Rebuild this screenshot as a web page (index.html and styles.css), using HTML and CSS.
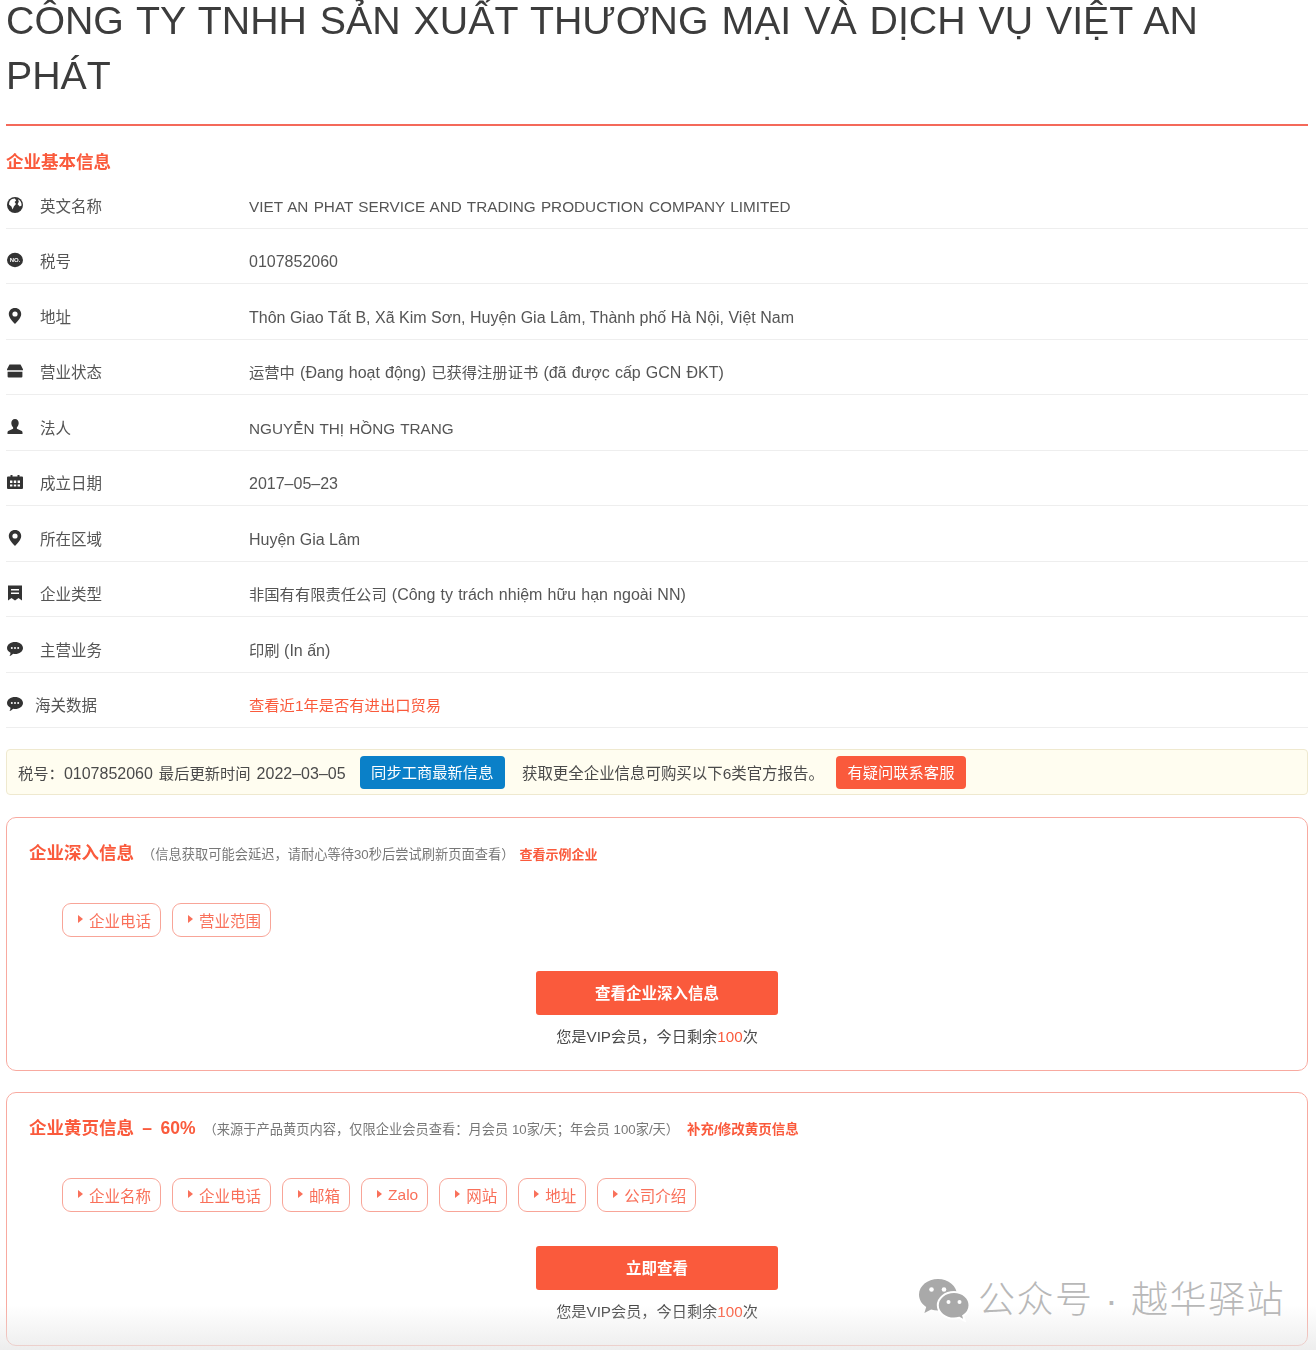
FILE: index.html
```html
<!DOCTYPE html>
<html lang="zh-CN">
<head>
    <meta charset="UTF-8">
    <title>企业基本信息</title>
    <link rel="stylesheet" href="styles.css">
</head>
<body>
    <svg class="sprite" xmlns="http://www.w3.org/2000/svg">
        <symbol id="i-globe" viewBox="0 0 16 16">
            <circle cx="8" cy="8" r="8" fill="#333"/>
            <path d="M5 2 7.800 1.600 9.200 3.400 7.600 5 9 7 7 9.200 5.600 12.400 4.400 9.600 2 7.600A6.400 6.400 0 0 1 5 2Z" fill="#fff"/>
            <path d="M11 2.200A6.600 6.600 0 0 1 14.600 8.400L12.800 9.400 10.600 7.200 11.800 4.800Z" fill="#fff"/>
        </symbol>
        <symbol id="i-no" viewBox="0 0 16 16">
            <ellipse cx="8" cy="8" rx="8" ry="7.200" fill="#333"/>
            <text x="8" y="10" text-anchor="middle" class="badge-text">NO.</text>
        </symbol>
        <symbol id="i-pin" viewBox="0 0 16 16">
            <path d="M8 0C4.200 0 1.800 2.700 1.800 6c0 3.800 3.900 7.600 6.200 10 2.300-2.400 6.200-6.200 6.200-10C14.200 2.700 11.800 0 8 0Z" fill="#333"/>
            <circle cx="8" cy="6" r="2.600" fill="#fff"/>
        </symbol>
        <symbol id="i-store" viewBox="0 0 16 16">
            <path d="M2.500 1.500h11L16 6.200v1H0v-1Z" fill="#333"/>
            <path d="M.6 8.800h14.800v4.700a1 1 0 0 1-1 1H1.600a1 1 0 0 1-1-1Z" fill="#333"/>
        </symbol>
        <symbol id="i-user" viewBox="0 0 16 16">
            <path d="M8 0c2.300 0 3.700 1.700 3.700 4 0 1.800-.8 3.500-1.800 4.300v1.400l4.400 2c.9.400 1.200 1 1.200 1.800V15H.5v-1.500c0-.8.300-1.400 1.200-1.800l4.400-2V8.300C5.100 7.500 4.300 5.800 4.300 4 4.300 1.700 5.700 0 8 0Z" fill="#333"/>
        </symbol>
        <symbol id="i-calendar" viewBox="0 0 16 16">
            <path d="M1 2.500h2.500V1h2v1.500h5V1h2v1.500H15a1 1 0 0 1 1 1V14a1 1 0 0 1-1 1H1a1 1 0 0 1-1-1V3.500a1 1 0 0 1 1-1Z" fill="#333"/>
            <path d="M3 6.500h2.400v2.400H3ZM6.800 6.500h2.400v2.400H6.800ZM10.600 6.500H13v2.400h-2.400ZM3 10.400h2.400v2.200H3ZM6.800 10.400h2.400v2.200H6.800ZM10.600 10.400H13v2.200h-2.400Z" fill="#fff"/>
        </symbol>
        <symbol id="i-book" viewBox="0 0 16 16">
            <path d="M1 .5h14v15l-3.500-2.600L8 15.500l-3.500-2.600L1 15.500Z" fill="#333"/>
            <path d="M4 4h8v1.600H4ZM4 7.500h8v1.600H4Z" fill="#fff"/>
        </symbol>
        <symbol id="i-chat" viewBox="0 0 16 16">
            <path d="M8 1c4.400 0 8 2.600 8 6s-3.600 6-8 6c-.7 0-1.300-.1-1.900-.2C5 14 3.800 14.800 2.500 15c.7-1 1-2 1-3.200C1.400 10.700 0 9 0 7c0-3.400 3.600-6 8-6Z" fill="#333"/>
            <circle cx="4.800" cy="7" r="1" fill="#fff"/>
            <circle cx="8" cy="7" r="1" fill="#fff"/>
            <circle cx="11.200" cy="7" r="1" fill="#fff"/>
        </symbol>
    </svg>

    <div class="page">
        <h1 class="company-name">CÔNG TY TNHH SẢN XUẤT THƯƠNG MẠI VÀ DỊCH VỤ VIỆT AN PHÁT</h1>

        <h2 class="section-title">企业基本信息</h2>

        <div class="info-list">
            <div class="info-row">
                <svg class="info-icon"><use href="#i-globe"/></svg>
                <span class="info-label">英文名称</span>
                <span class="info-value info-caps">VIET AN PHAT SERVICE AND TRADING PRODUCTION COMPANY LIMITED</span>
            </div>
            <div class="info-row">
                <svg class="info-icon"><use href="#i-no"/></svg>
                <span class="info-label">税号</span>
                <span class="info-value">0107852060</span>
            </div>
            <div class="info-row">
                <svg class="info-icon"><use href="#i-pin"/></svg>
                <span class="info-label">地址</span>
                <span class="info-value">Thôn Giao Tất B, Xã Kim Sơn, Huyện Gia Lâm, Thành phố Hà Nội, Việt Nam</span>
            </div>
            <div class="info-row">
                <svg class="info-icon"><use href="#i-store"/></svg>
                <span class="info-label">营业状态</span>
                <span class="info-value info-mixed"><span class="cjk">运营中</span> (Đang hoạt động) <span class="cjk">已获得注册证书</span> (đã được cấp GCN ĐKT)</span>
            </div>
            <div class="info-row">
                <svg class="info-icon"><use href="#i-user"/></svg>
                <span class="info-label">法人</span>
                <span class="info-value info-caps">NGUYỄN THỊ HỒNG TRANG</span>
            </div>
            <div class="info-row">
                <svg class="info-icon"><use href="#i-calendar"/></svg>
                <span class="info-label">成立日期</span>
                <span class="info-value">2017–05–23</span>
            </div>
            <div class="info-row">
                <svg class="info-icon"><use href="#i-pin"/></svg>
                <span class="info-label">所在区域</span>
                <span class="info-value">Huyện Gia Lâm</span>
            </div>
            <div class="info-row">
                <svg class="info-icon"><use href="#i-book"/></svg>
                <span class="info-label">企业类型</span>
                <span class="info-value info-mixed"><span class="cjk">非国有有限责任公司</span> (Công ty trách nhiệm hữu hạn ngoài NN)</span>
            </div>
            <div class="info-row">
                <svg class="info-icon"><use href="#i-chat"/></svg>
                <span class="info-label">主营业务</span>
                <span class="info-value"><span class="cjk">印刷</span> (In ấn)</span>
            </div>
            <div class="info-row info-row-tight">
                <svg class="info-icon"><use href="#i-chat"/></svg>
                <span class="info-label">海关数据</span>
                <a class="info-value info-link">查看近1年是否有进出口贸易</a>
            </div>
        </div>

        <div class="notice">
            <span class="notice-meta"><span class="cjk">税号：</span>0107852060 <span class="cjk">最后更新时间</span> 2022–03–05</span>
            <a class="notice-btn notice-btn-blue">同步工商最新信息</a>
            <span class="notice-text">获取更全企业信息可购买以下6类官方报告。</span>
            <a class="notice-btn notice-btn-red">有疑问联系客服</a>
        </div>

        <section class="card">
            <div class="card-head">
                <h3 class="card-title">企业深入信息</h3>
                <span class="card-note">（信息获取可能会延迟，请耐心等待30秒后尝试刷新页面查看）</span>
                <a class="card-link">查看示例企业</a>
            </div>
            <div class="tags">
                <span class="tag">企业电话</span>
                <span class="tag">营业范围</span>
            </div>
            <div class="card-action">
                <a class="main-btn">查看企业深入信息</a>
                <p class="quota">您是VIP会员，今日剩余<em>100</em>次</p>
            </div>
        </section>

        <section class="card">
            <div class="card-head">
                <h3 class="card-title">企业黄页信息 – 60%</h3>
                <span class="card-note">（来源于产品黄页内容，仅限企业会员查看：月会员 10家/天；年会员 100家/天）</span>
                <a class="card-link card-link-long">补充/修改黄页信息</a>
            </div>
            <div class="tags">
                <span class="tag">企业名称</span>
                <span class="tag">企业电话</span>
                <span class="tag">邮箱</span>
                <span class="tag">Zalo</span>
                <span class="tag">网站</span>
                <span class="tag">地址</span>
                <span class="tag">公司介绍</span>
            </div>
            <div class="card-action">
                <a class="main-btn">立即查看</a>
                <p class="quota">您是VIP会员，今日剩余<em>100</em>次</p>
            </div>
        </section>
    </div>

    <!-- 底部渐变和水印盖在内容上 -->
    <div class="bottom-fade"></div>
    <div class="watermark">
        <svg class="watermark-logo" viewBox="0 0 52 44">
            <path d="M20 1C9.500 1 1 8 1 16.800c0 5 2.800 9.300 7.200 12.200L6.400 35l6.700-3.600c2.200.6 4.500 1 6.900 1 10.500 0 19-7 19-15.600S30.500 1 20 1Z" fill="#a9a9a9"/>
            <path d="M36 14c-9 0-16.200 6-16.200 13.300S27 40.600 36 40.600c1.900 0 3.700-.3 5.400-.8l5.300 3-1.500-5c3.900-2.400 6.300-6.200 6.300-10.500C51.500 20 45 14 36 14Z" fill="#a9a9a9" stroke="#fff" stroke-width="2"/>
            <circle cx="13.500" cy="11.500" r="2.300" fill="#fff"/>
            <circle cx="26" cy="11.500" r="2.300" fill="#fff"/>
            <circle cx="30.500" cy="24" r="2" fill="#fff"/>
            <circle cx="41.500" cy="24" r="2" fill="#fff"/>
        </svg>
        <span class="watermark-text">公众号 · 越华驿站</span>
    </div>
</body>
</html>
```

FILE: styles.css
```css
* {
    margin: 0;
    padding: 0;
    box-sizing: border-box;
}

html, body {
    height: 1350px;
    overflow: hidden;
}

body {
    font-family: "Liberation Sans", "Noto Sans CJK SC", sans-serif;
    background: #fff;
    color: #555;
    position: relative;
}

.sprite {
    display: none;
}

/* 原图本身有点糊 */
.page {
    padding: 0 8px 0 6px;
    filter: blur(0.4px);
}

.cjk {
    font-size: 15.3px;
}

.company-name {
    margin-top: -7px;
    padding-bottom: 21px;
    border-bottom: 2px solid #f4695a;
    font-size: 39.3px;
    line-height: 55px;
    font-weight: normal;
    word-spacing: 2px;
    color: #3c3c3c;
}

.section-title {
    margin-top: 24px;
    margin-bottom: -1px;
    font-size: 17.5px;
    line-height: 24px;
    color: #fa5a3c;
}

.info-row {
    display: grid;
    grid-template-columns: 34px 209px 1fr;
    align-items: center;
    height: 55.5px;
    padding: 21.5px 0 9px;
    border-bottom: 1px solid #eee;
    font-size: 16px;
    line-height: 24px;
}

.info-row-tight {
    grid-template-columns: 29px 214px 1fr;
}

.info-icon {
    width: 16px;
    height: 16px;
    margin: -4px 0 0 1px;
}

.badge-text {
    font-family: "Liberation Sans", sans-serif;
    font-size: 6px;
    font-weight: bold;
    fill: #fff;
}

.info-label {
    font-size: 15.5px;
}

.info-caps {
    font-size: 15.3px;
    word-spacing: 1px;
}

.info-mixed {
    word-spacing: 0.7px;
}

.info-link {
    font-size: 15.3px;
    color: #fa5a3c;
}

.notice {
    display: flex;
    align-items: center;
    height: 46px;
    margin-top: 21px;
    padding: 0 11px;
    background: #fffdf0;
    border: 1px solid #efe9cf;
    border-radius: 4px;
    font-size: 16px;
    color: #4a4a4a;
}

.notice-meta {
    word-spacing: 1.5px;
}

.notice-text {
    margin-left: 17px;
    font-size: 15.45px;
}

.notice-btn {
    height: 33px;
    padding: 0 11.5px;
    border-radius: 4px;
    font-size: 15.3px;
    line-height: 33px;
    color: #fff;
}

.notice-btn-blue {
    margin-left: 14px;
    background: #0a80c8;
}

.notice-btn-red {
    margin-left: 12px;
    background: #fa5a3c;
}

.card {
    height: 254px;
    margin-top: 22px;
    padding: 22px 22px 0;
    border: 1px solid #f8aaa0;
    border-radius: 10px;
}

.card + .card {
    margin-top: 21px;
}

.card-head {
    display: flex;
    align-items: center;
    height: 26px;
}

.card-title {
    font-size: 17.5px;
    line-height: 26px;
    word-spacing: 3.5px;
    color: #fa5a3c;
}

.card-note {
    margin-left: 8px;
    font-size: 13.26px;
    color: #777;
}

.card-link {
    margin-left: 5px;
    font-size: 13px;
    font-weight: bold;
    color: #fa5a3c;
}

.card-link-long {
    margin-left: 8px;
    font-size: 13.5px;
}

.tags {
    display: flex;
    gap: 11px;
    margin: 37px 0 0 33px;
}

.tag {
    display: flex;
    align-items: center;
    height: 34px;
    padding: 0 9px 0 15px;
    border: 1px solid #f8a598;
    border-radius: 9px;
    font-size: 15.5px;
    color: #f9705a;
}

.tag::before {
    content: "";
    width: 0;
    height: 0;
    margin: -2px 6px 0 0;
    border-left: 5px solid #f9705a;
    border-top: 4.5px solid transparent;
    border-bottom: 4.5px solid transparent;
}

.card-action {
    display: flex;
    flex-direction: column;
    align-items: center;
    margin-top: 34px;
}

.main-btn {
    width: 242px;
    height: 44px;
    border-radius: 3px;
    background: #fa5a3c;
    font-size: 15.5px;
    font-weight: bold;
    line-height: 45px;
    text-align: center;
    color: #fff;
}

.quota {
    margin-top: 11px;
    font-size: 15.2px;
    line-height: 22px;
    color: #4a4a4a;
}

.quota em {
    font-style: normal;
    color: #fa5a3c;
}

.bottom-fade {
    position: absolute;
    left: 0;
    right: 0;
    bottom: 0;
    height: 45px;
    background: linear-gradient(rgba(230, 230, 230, 0), rgba(230, 230, 230, 0.7));
    pointer-events: none;
}

.watermark {
    position: absolute;
    left: 918px;
    top: 1276px;
    display: flex;
    align-items: center;
    gap: 8px;
    color: #b8b8b8;
}

.watermark-logo {
    width: 52px;
    height: 44px;
}

.watermark-text {
    padding-top: 3px;
    font-size: 37px;
    line-height: 44px;
    font-weight: 300;
    letter-spacing: 1.5px;
}
```
